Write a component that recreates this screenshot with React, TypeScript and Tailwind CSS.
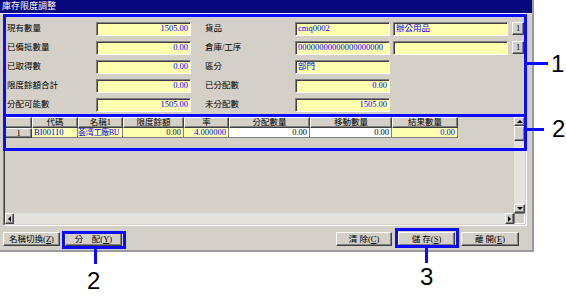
const DITHER = "bg-[#ffffb0]";
const SUNKEN =
  "border border-t-[#808080] border-l-[#808080] border-r-white border-b-white shadow-[inset_1px_1px_0_#404040]";
const RAISED =
  "border border-t-white border-l-white border-r-[#404040] border-b-[#404040] shadow-[inset_-1px_-1px_0_#808080]";

const leftRows = [
  ["現有數量", "1505.00"],
  ["已備抵數量", "0.00"],
  ["已取得數", "0.00"],
  ["限度餘額合計", "0.00"],
  ["分配可能數", "1505.00"],
];

const midRows: Array<{ label: string; value: string; right?: boolean; extra?: string }> = [
  { label: "貨品", value: "cmq0002", extra: "辦公用品" },
  { label: "倉庫/工序", value: "00000000000000000000", extra: "" },
  { label: "區分", value: "部門" },
  { label: "已分配數", value: "0.00", right: true },
  { label: "未分配數", value: "1505.00", right: true },
];

const cols = [
  { w: "w-[27px]", title: "" },
  { w: "w-[46px]", title: "代碼" },
  { w: "w-[45px]", title: "名稱1" },
  { w: "w-[61px]", title: "限度餘額" },
  { w: "w-[45px]", title: "率" },
  { w: "w-[81px]", title: "分配數量" },
  { w: "w-[82px]", title: "移動數量" },
  { w: "w-[66px]", title: "結果數量" },
];

function Field({ value, w, right }: { value: string; w: string; right?: boolean }) {
  return (
    <div
      className={`${SUNKEN} ${DITHER} ${w} h-[14px] flex items-center px-[2px] text-[#0000ff] whitespace-nowrap overflow-hidden ${
        right ? "justify-end" : "justify-start"
      }`}
    >
      {value}
    </div>
  );
}

function Arrow({ dir }: { dir: "up" | "down" | "left" | "right" }) {
  const pts = {
    up: "1,4 4,1 7,4",
    down: "1,1 4,4 7,1",
    left: "4,1 1,4 4,7",
    right: "1,1 4,4 1,7",
  }[dir];
  const vertical = dir === "up" || dir === "down";
  return (
    <svg width={vertical ? 8 : 5} height={vertical ? 5 : 8} viewBox={vertical ? "0 0 8 5" : "0 0 5 8"}>
      <polygon points={pts} fill="#000" />
    </svg>
  );
}

function Button({ w, children }: { w: string; children: React.ReactNode }) {
  return (
    <div className={`${RAISED} ${w} h-[14px] flex items-center justify-center bg-[#d4d0c8] whitespace-nowrap`}>
      {children}
    </div>
  );
}

export default function App() {
  return (
    <div className="relative w-[566px] h-[296px] bg-white overflow-hidden font-['Liberation_Serif','Noto_Sans_CJK_TC',serif] text-[8.5px] text-black leading-none">
      <div className="w-[534px] h-[252px] bg-[#d4d0c8] flex flex-col border-r-2 border-b-2 border-r-[#9a9a9a] border-b-[#9a9a9a]">
        <div className="h-[13px] bg-[#08087e] text-white pl-[2px] flex items-center text-[9px]">庫存限度調整</div>
        <div className="h-px bg-[#f0f0f0]" />

        {/* form */}
        <div className="pt-[5px] pl-[7px] flex flex-col">
          {leftRows.map(([label, value], i) => {
            const m = midRows[i];
            return (
              <div key={label} className="h-[19px] flex items-center">
                <div className="w-[89px]">{label}</div>
                <Field value={value} w="w-[95px]" right />
                <div className="ml-[14px] w-[90px]">{m.label}</div>
                <Field value={m.value} w="w-[95px]" right={m.right} />
                {m.extra !== undefined && (
                  <>
                    <div className="ml-[3px]">
                      <Field value={m.extra} w="w-[115px]" />
                    </div>
                    <div className={`${RAISED} ml-[4px] w-[12px] h-[13px] flex items-center justify-center`}>1</div>
                  </>
                )}
              </div>
            );
          })}
        </div>

        {/* grid */}
        <div className="mt-px ml-[3px] w-[524px] h-[111px] border border-t-[#808080] border-l-[#808080] border-r-white border-b-white">
          <div className="w-full h-full border border-t-[#404040] border-l-[#404040] border-r-[#d4d0c8] border-b-[#d4d0c8] flex flex-col">
            <div className="flex-1 flex min-h-0">
              <div className="flex-1 flex flex-col">
                <div className="flex h-[11px]">
                  {cols.map((c, i) => (
                    <div key={i} className={`${RAISED} ${c.w} flex items-center justify-center`}>
                      {c.title}
                    </div>
                  ))}
                </div>
                <div className="flex h-[10px]">
                  <div className={`${RAISED} w-[27px] flex items-center justify-center`}>1</div>
                  <div className={`${DITHER} w-[46px] border-r border-b border-[#808080] flex items-center px-[2px] text-[#0000ff]`}>
                    BI00110
                  </div>
                  <div className={`${DITHER} w-[45px] border-r border-b border-[#808080] flex items-center text-[#0000ff] whitespace-nowrap overflow-hidden text-[8px] tracking-[-0.3px]`}>
                    荟湾工廠BU
                  </div>
                  <div className={`${DITHER} w-[61px] border-r border-b border-[#808080] flex items-center justify-end px-[2px] text-[#101040]`}>
                    0.00
                  </div>
                  <div className={`${DITHER} w-[45px] border-r border-b border-[#808080] flex items-center justify-end px-[2px] text-[#0000ff]`}>
                    4.000000
                  </div>
                  <div className="bg-white w-[81px] border-r border-b border-[#808080] flex items-center justify-end px-[2px]">
                    0.00
                  </div>
                  <div className="bg-white w-[82px] border-r border-b border-[#808080] flex items-center justify-end px-[2px]">
                    0.00
                  </div>
                  <div className={`${DITHER} w-[66px] border-r border-b border-[#808080] flex items-center justify-end px-[2px] text-[#0000ff]`}>
                    0.00
                  </div>
                </div>
              </div>
              {/* vertical scrollbar */}
              <div className="w-[11px] flex flex-col bg-[#e4e2dd]">
                <div className={`${RAISED} h-[9px] bg-[#d4d0c8] flex items-center justify-center`}>
                  <Arrow dir="up" />
                </div>
                <div className={`${RAISED} h-[15px] bg-[#d4d0c8]`} />
                <div className="flex-1" />
                <div className={`${RAISED} h-[9px] bg-[#d4d0c8] flex items-center justify-center`}>
                  <Arrow dir="down" />
                </div>
              </div>
            </div>
            {/* horizontal scrollbar */}
            <div className="h-[11px] flex">
              <div className="flex-1 flex bg-[#e4e2dd]">
                <div className={`${RAISED} w-[9px] bg-[#d4d0c8] flex items-center justify-center`}>
                  <Arrow dir="left" />
                </div>
                <div className="flex-1" />
                <div className={`${RAISED} w-[9px] bg-[#d4d0c8] flex items-center justify-center`}>
                  <Arrow dir="right" />
                </div>
              </div>
              <div className="w-[11px] border border-t-[#808080] border-l-[#808080] border-r-white border-b-white bg-[#d4d0c8]" />
            </div>
          </div>
        </div>

        {/* buttons */}
        <div className="mt-[6px] flex px-[3px] pr-[13px]">
          <div className="flex gap-[5px]">
            <Button w="w-[57px]">
              名稱切換(<u>Z</u>)
            </Button>
            <Button w="w-[57px]">
              分　配(<u>Y</u>)
            </Button>
          </div>
          <div className="ml-auto flex gap-[6px]">
            <Button w="w-[56px]">
              清 除(<u>C</u>)
            </Button>
            <Button w="w-[57px]">
              儲 存(<u>S</u>)
            </Button>
            <Button w="w-[58px]">
              離 開(<u>E</u>)
            </Button>
          </div>
        </div>
      </div>

      {/* callout frames */}
      <div className="absolute left-[3px] top-[14px] w-[524px] h-[103px] border-[3px] border-[#0a0aff]" />
      <div className="absolute left-[3px] top-[114px] w-[524px] h-[37px] border-[3px] border-[#0a0aff]" />
      <div className="absolute left-[62px] top-[231px] w-[64px] h-[18px] border-[3px] border-[#0a0aff]" />
      <div className="absolute left-[395px] top-[228px] w-[64px] h-[20px] border-[3px] border-[#0a0aff]" />

      <div className="absolute left-[526px] top-[62px] w-[22px] h-[3px] bg-[#0a0aff]" />
      <div className="absolute left-[527px] top-[128px] w-[17px] h-[3px] bg-[#0a0aff]" />
      <div className="absolute left-[94px] top-[249px] w-[3px] h-[15px] bg-[#0a0aff]" />
      <div className="absolute left-[425px] top-[247px] w-[3px] h-[16px] bg-[#0a0aff]" />

      <div className="absolute left-[551px] top-[52px] text-[24px] leading-[24px] font-['Liberation_Sans',sans-serif]">1</div>
      <div className="absolute left-[552px] top-[117px] text-[24px] leading-[24px] font-['Liberation_Sans',sans-serif]">2</div>
      <div className="absolute left-[87px] top-[269px] text-[24px] leading-[24px] font-['Liberation_Sans',sans-serif]">2</div>
      <div className="absolute left-[420px] top-[265px] text-[24px] leading-[24px] font-['Liberation_Sans',sans-serif]">3</div>
    </div>
  );
}
